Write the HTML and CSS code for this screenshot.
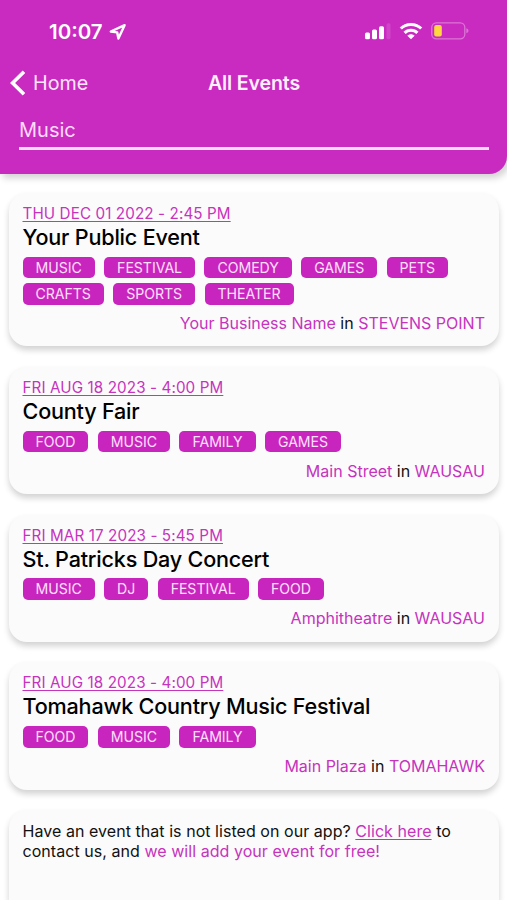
FILE: index.html
```html
<!DOCTYPE html>
<html lang="en">
<head>
  <meta charset="UTF-8">
  <meta name="viewport" content="width=device-width, initial-scale=1.0">
  <title>All Events</title>
  <link rel="stylesheet" href="styles.css">
</head>
<body>

<header class="header">
  <div class="status-bar">
    <div class="status-time">
      <span>10:07</span>
      <svg class="location-icon" width="18" height="18" viewBox="0 0 18 18" fill="none" stroke="#fff" stroke-width="2.4" stroke-linejoin="round">
        <path d="M15.6 2.2 L1.8 8.5 L8.2 9.4 L9.4 15.6 Z"/>
      </svg>
    </div>
    <div class="status-icons">
      <svg width="27" height="18" viewBox="0 0 27 18" fill="#fff">
        <rect x="1" y="10.4" width="5" height="6.9" rx="1.5"/>
        <rect x="8" y="7.5" width="5" height="9.8" rx="1.5"/>
        <rect x="15" y="4.3" width="5" height="13" rx="1.5"/>
        <rect x="22.5" y="1.3" width="4" height="16" rx="1.5" opacity="0.13"/>
      </svg>
      <svg class="wifi-icon" width="24" height="18" viewBox="0 0 24 18" fill="none" stroke="#fff" stroke-width="3">
        <path d="M1.8 6.6 C7 1 17 1 22.2 6.6"/>
        <path d="M5.6 10.9 C9 7.3 15 7.3 18.4 10.9"/>
        <path d="M12 17.2 L8.4 13.8 C10.4 11.8 13.6 11.8 15.6 13.8 Z" fill="#fff" stroke="none"/>
      </svg>
      <svg class="battery-icon" width="38" height="18" viewBox="0 0 38 18" fill="none">
        <rect x="0.8" y="0.8" width="33" height="16" rx="4.5" stroke="#fff" stroke-width="1.3" opacity="0.35"/>
        <path d="M35.3 6.3 C38.2 7 38.2 10.6 35.3 11.3 Z" fill="#fff" opacity="0.35"/>
        <rect x="3.2" y="3" width="7.6" height="11.6" rx="2" fill="#ffd83d"/>
      </svg>
    </div>
  </div>

  <nav class="nav">
    <a class="nav-back">
      <svg width="17" height="26" viewBox="0 0 17 26" fill="none" stroke="#fff" stroke-width="3.6">
        <path d="M15 1.8 L3.6 13 L15 24.2"/>
      </svg>
      <span>Home</span>
    </a>
    <h1 class="nav-title">All Events</h1>
  </nav>

  <div class="search">Music</div>
</header>

<main class="events">
  <div class="card">
    <div class="date">THU DEC 01 2022 - 2:45 PM</div>
    <h2 class="title">Your Public Event</h2>
    <div class="tags">
      <span class="tag">MUSIC</span>
      <span class="tag">FESTIVAL</span>
      <span class="tag">COMEDY</span>
      <span class="tag">GAMES</span>
      <span class="tag">PETS</span>
      <span class="tag">CRAFTS</span>
      <span class="tag">SPORTS</span>
      <span class="tag">THEATER</span>
    </div>
    <div class="place"><span class="accent">Your Business Name</span> in <span class="accent">STEVENS POINT</span></div>
  </div>

  <div class="card">
    <div class="date">FRI AUG 18 2023 - 4:00 PM</div>
    <h2 class="title">County Fair</h2>
    <div class="tags">
      <span class="tag">FOOD</span>
      <span class="tag">MUSIC</span>
      <span class="tag">FAMILY</span>
      <span class="tag">GAMES</span>
    </div>
    <div class="place"><span class="accent">Main Street</span> in <span class="accent">WAUSAU</span></div>
  </div>

  <div class="card">
    <div class="date">FRI MAR 17 2023 - 5:45 PM</div>
    <h2 class="title">St. Patricks Day Concert</h2>
    <div class="tags">
      <span class="tag">MUSIC</span>
      <span class="tag">DJ</span>
      <span class="tag">FESTIVAL</span>
      <span class="tag">FOOD</span>
    </div>
    <div class="place"><span class="accent">Amphitheatre</span> in <span class="accent">WAUSAU</span></div>
  </div>

  <div class="card">
    <div class="date">FRI AUG 18 2023 - 4:00 PM</div>
    <h2 class="title">Tomahawk Country Music Festival</h2>
    <div class="tags">
      <span class="tag">FOOD</span>
      <span class="tag">MUSIC</span>
      <span class="tag">FAMILY</span>
    </div>
    <div class="place"><span class="accent">Main Plaza</span> in <span class="accent">TOMAHAWK</span></div>
  </div>

  <div class="card contact">
    Have an event that is not listed on our app? <a class="accent link">Click here</a> to<br>
    contact us, and <span class="accent">we will add your event for free!</span>
  </div>
</main>

</body>
</html>
```
FILE: styles.css
```css
* {
  box-sizing: border-box;
}
body {
  display: flex;
  flex-direction: column;
  margin: 0;
  height: 100vh;
  background: #fff;
  color: #111;
  font-family: Inter, "Liberation Sans", sans-serif;
}
.header {
  flex: none;
  height: 173.5px;
  padding: 21px 18px 0 19px;
  background: #c92ac0;
  color: #fff;
  border-bottom-right-radius: 18px;
  box-shadow: 3px 4px 7px rgba(0,0,0,0.18);
}
.status-bar {
  display: flex;
  justify-content: space-between;
  height: 22px;
  padding: 0 20px 0 30px;
}
.status-time {
  display: flex;
  align-items: center;
  gap: 6px;
  font-size: 20.5px;
  font-weight: 600;
  line-height: 22px;
}
.status-icons {
  display: flex;
  align-items: center;
  padding-bottom: 2px;
}
.wifi-icon {
  margin-left: 8px;
}
.battery-icon {
  margin-left: 8.5px;
}
.nav {
  display: grid;
  grid-template-columns: 1fr auto 1fr;
  align-items: center;
  height: 26px;
  margin: 27px 0 0 -10px;
}
.nav-back {
  display: flex;
  align-items: center;
  gap: 7px;
  font-size: 19.7px;
  color: #ffe6fd;
}
.nav-title {
  margin: 0 -5px 0 5px;
  font-size: 19.5px;
  font-weight: 600;
  letter-spacing: -0.1px;
  color: #fff0fe;
}
.search {
  height: 54px;
  padding-top: 21px;
  font-size: 20px;
  line-height: 26px;
  color: #ffdcfb;
  border-bottom: 3px solid #fadcf8;
}
.events {
  display: flex;
  flex: 1;
  flex-direction: column;
  gap: 20.6px;
  padding: 19.5px 8.5px 0 9px;
}
.card {
  padding: 11px 13.5px 13px 13.5px;
  background: #fbfbfc;
  border-radius: 18px;
  box-shadow: 0 4px 6px rgba(0,0,0,0.18);
}
.date {
  font-size: 15.2px;
  line-height: 20px;
  letter-spacing: 0.11px;
  color: #c633bd;
  text-decoration: underline;
  text-decoration-thickness: 1.3px;
  text-underline-offset: 1.5px;
}
.title {
  margin: 0;
  font-size: 21.6px;
  font-weight: 500;
  line-height: 27.6px;
  letter-spacing: -0.2px;
  color: #000;
}
.tags {
  display: flex;
  flex-wrap: wrap;
  gap: 4.8px 9.4px;
  margin-top: 5px;
}
.tag {
  height: 21.6px;
  padding: 0 13px;
  border-radius: 5px;
  background: #c825be;
  color: #ffe0fc;
  font-size: 14.1px;
  line-height: 22px;
  letter-spacing: -0.03px;
}
.place {
  margin-top: 8.5px;
  font-size: 16px;
  line-height: 20.4px;
  text-align: right;
}
.accent {
  color: #c633bd;
}
/* last card runs down to the bottom of the screen */
.contact {
  flex: 1;
  padding-top: 10.6px;
  border-radius: 18px 18px 0 0;
  font-size: 16px;
  line-height: 20px;
  letter-spacing: 0.05px;
}
.link {
  text-decoration: underline;
  text-decoration-thickness: 1.3px;
  text-underline-offset: 1.5px;
}
```
